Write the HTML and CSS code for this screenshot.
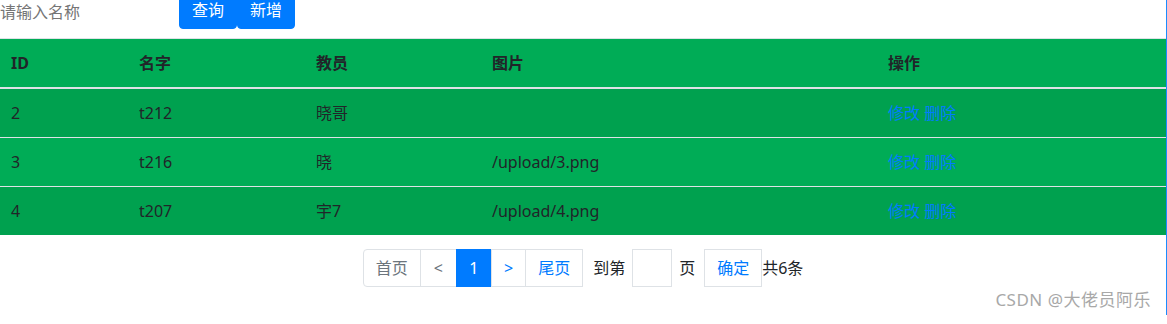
FILE: index.html
```html
<!DOCTYPE html>
<html lang="zh">
<head>
  <meta charset="UTF-8">
  <meta name="viewport" content="width=device-width, initial-scale=1.0">
  <title>教员列表</title>
  <link rel="stylesheet" href="styles.css">
</head>
<body>
  <div class="page">
    <div class="toolbar">
      <input class="search" type="text" placeholder="请输入名称">
      <button class="btn">查询</button>
      <button class="btn">新增</button>
    </div>

    <table class="table">
      <thead>
        <tr>
          <th class="c-id">ID</th>
          <th class="c-name">名字</th>
          <th class="c-teacher">教员</th>
          <th class="c-pic">图片</th>
          <th>操作</th>
        </tr>
      </thead>
      <tbody>
        <tr class="odd">
          <td>2</td>
          <td>t212</td>
          <td>晓哥</td>
          <td></td>
          <td><a href="#">修改</a> <a href="#">删除</a></td>
        </tr>
        <tr>
          <td>3</td>
          <td>t216</td>
          <td>晓</td>
          <td>/upload/3.png</td>
          <td><a href="#">修改</a> <a href="#">删除</a></td>
        </tr>
        <tr class="odd">
          <td>4</td>
          <td>t207</td>
          <td>宇7</td>
          <td>/upload/4.png</td>
          <td><a href="#">修改</a> <a href="#">删除</a></td>
        </tr>
      </tbody>
    </table>

    <div class="pager">
      <ul class="pagination">
        <li class="disabled"><a href="#">首页</a></li>
        <li class="disabled"><a class="prev" href="#">&lt;</a></li>
        <li class="active"><a class="cur" href="#">1</a></li>
        <li><a href="#">&gt;</a></li>
        <li><a href="#">尾页</a></li>
      </ul>
      <span class="label">到第</span>
      <input class="goto" type="text">
      <span class="label unit">页</span>
      <button class="confirm">确定</button>
      <span class="total">共6条</span>
    </div>

    <div class="watermark">CSDN @大佬员阿乐</div>
  </div>
</body>
</html>
```

FILE: styles.css
```css
/* General */
body {
  margin: 0;
  font-family: "Segoe UI", "Noto Sans", "Noto Sans CJK SC", sans-serif;
  font-size: 16px;
  line-height: 1.5;
  color: #212529;
  background-color: #fff;
  overflow: hidden;
}

.page {
  position: relative;
  height: 324px;
  border-right: 1px solid #1a8cff;
  box-sizing: border-box;
}

/* Toolbar */
.toolbar {
  display: flex;
  align-items: center;
  margin-top: -9px;
  height: 38px;
}

.search {
  width: 179px;
  height: 38px;
  border: none;
  padding: 4px 0 0;
  font: inherit;
  outline: none;
  box-sizing: border-box;
}

.search::placeholder {
  color: #757575;
}

.btn {
  height: 38px;
  padding: 6px 12px;
  font: inherit;
  color: #fff;
  background-color: #007bff;
  border: 1px solid #007bff;
  border-radius: 4px;
  cursor: pointer;
}

/* Table */
.table {
  width: 1166px;
  margin-top: 9px;
  border-collapse: collapse;
  background-color: #00ac56;
}

.table th,
.table td {
  padding: 12px 11px;
  text-align: left;
  vertical-align: top;
  border-top: 1px solid #dee2e6;
  line-height: 24px;
}

.table th {
  font-weight: 700;
  border-bottom: 2px solid #dee2e6;
}

.table tr.odd {
  background-color: #00a14f;
}

.c-id { width: 106px; }
.c-name { width: 155px; }
.c-teacher { width: 154px; }
.c-pic { width: 374px; }

.table a {
  color: #007bff;
  text-decoration: none;
}

/* Pagination */
.pager {
  display: flex;
  justify-content: center;
  align-items: center;
  margin-top: 14px;
}

.pagination {
  display: flex;
  list-style: none;
  margin: 0;
  padding: 0;
}

.pagination a {
  display: block;
  padding: 8px 12px;
  line-height: 20px;
  color: #007bff;
  text-decoration: none;
  border: 1px solid #dee2e6;
  margin-left: -1px;
  background-color: #fff;
}

.pagination a.prev {
  padding: 8px 13px;
}

.pagination a.cur {
  padding: 8px 12.5px;
}

.pagination li:first-child a {
  margin-left: 0;
  border-radius: 4px 0 0 4px;
}

.pagination li.disabled a {
  color: #6c757d;
}

.pagination li.active a {
  color: #fff;
  background-color: #007bff;
  border-color: #007bff;
}

.label {
  margin-left: 10px;
}

.label.unit {
  margin-left: 7px;
}

.goto {
  width: 40px;
  height: 38px;
  margin-left: 7px;
  border: 1px solid #dee2e6;
  padding: 0;
  box-sizing: border-box;
}

.confirm {
  height: 38px;
  margin-left: 9px;
  padding: 0 12px;
  font: inherit;
  color: #007bff;
  background-color: #fff;
  border: 1px solid #dee2e6;
}

/* Watermark */
.watermark {
  position: absolute;
  right: 15px;
  bottom: 3px;
  color: #a8a8a8;
  font-size: 17px;
  letter-spacing: 0.5px;
}
```
